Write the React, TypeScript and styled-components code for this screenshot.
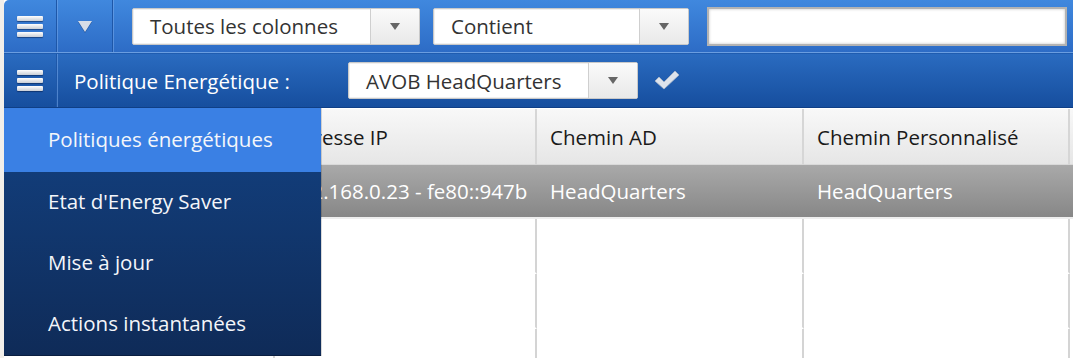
import React from 'react'
import styled, { createGlobalStyle } from 'styled-components'

const GlobalStyle = createGlobalStyle`
  html, body {
    margin: 0;
    padding: 0;
    background: #f2efea;
    font-family: "Open Sans", "Noto Sans", sans-serif;
  }
`

const menuItems = ['Politiques énergétiques', "Etat d'Energy Saver", 'Mise à jour', 'Actions instantanées']

const App = () => {
  return (
    <Frame>
      <GlobalStyle />
      <Shell>
        <TopBar>
          <IconCell>
            <Burger>
              <span />
              <span />
              <span />
            </Burger>
          </IconCell>
          <IconCell wide>
            <WhiteTriangle />
          </IconCell>
          <Filters>
            <Select width={288}>
              <span className="value">Toutes les colonnes</span>
              <span className="arrow">
                <SmallTriangle />
              </span>
            </Select>
            <Select width={256}>
              <span className="value">Contient</span>
              <span className="arrow">
                <SmallTriangle />
              </span>
            </Select>
            <SearchBox />
          </Filters>
        </TopBar>
        <SubBar>
          <IconCell>
            <Burger>
              <span />
              <span />
              <span />
            </Burger>
          </IconCell>
          <Label>Politique Energétique :</Label>
          <Select width={290}>
            <span className="value">AVOB HeadQuarters</span>
            <span className="arrow">
              <SmallTriangle />
            </span>
          </Select>
          <Check viewBox="0 0 28 22">
            <path
              d="M2 12 L6 8 L11 13 L22 2 L26 6 L11 20 Z"
              fill="#dde3ec"
              stroke="#aab6c8"
              strokeWidth="0.8"
              strokeLinejoin="round"
            />
          </Check>
        </SubBar>
        <Table>
          <HeadCell />
          <HeadCell>Adresse IP</HeadCell>
          <HeadCell>Chemin AD</HeadCell>
          <HeadCell>Chemin Personnalisé</HeadCell>
          <HeadCell />
          <RowCell selected />
          <RowCell selected>192.168.0.23 - fe80::947b</RowCell>
          <RowCell selected>HeadQuarters</RowCell>
          <RowCell selected>HeadQuarters</RowCell>
          <RowCell selected />
          {[0, 1, 2].map((r) =>
            [0, 1, 2, 3, 4].map((c) => <EmptyCell key={`${r}-${c}`} />)
          )}
        </Table>
        <Menu>
          {menuItems.map((item, i) => (
            <MenuItem key={item} active={i === 0} first={i === 0}>
              {item}
            </MenuItem>
          ))}
        </Menu>
      </Shell>
    </Frame>
  )
}

export default App

const Frame = styled.div`
  padding-left: 4px;
  height: 358px;
  overflow: hidden;
`

const Shell = styled.div`
  position: relative;
  background: #fff;
`

const TopBar = styled.div`
  display: flex;
  align-items: stretch;
  height: 52px;
  border-top-left-radius: 5px;
  background: linear-gradient(#4088de, #2d6cc6);
  border-bottom: 1px solid #6a9de0;
`

const SubBar = styled.div`
  display: flex;
  align-items: center;
  height: 53px;
  background: linear-gradient(#2a6bc0, #164e9e);
  border-bottom: 1px solid #0f3f86;
  border-top: 1px solid #1f5cb0;
`

const IconCell = styled.div<{ wide?: boolean }>`
  display: flex;
  align-items: center;
  justify-content: center;
  align-self: stretch;
  width: ${(p) => (p.wide ? 55 : 52)}px;
  border-right: 1px solid #1e57a8;
  box-shadow: 1px 0 0 rgba(120, 170, 235, 0.55);
`

const Burger = styled.div`
  display: flex;
  flex-direction: column;
  gap: 3px;
  width: 26px;

  span {
    display: block;
    height: 5px;
    border-radius: 1px;
    background: linear-gradient(#ffffff, #c9ced6);
    box-shadow: 0 1px 1px rgba(0, 20, 60, 0.5);
  }
`

const WhiteTriangle = styled.div`
  width: 0;
  height: 0;
  border-left: 7px solid transparent;
  border-right: 7px solid transparent;
  border-top: 11px solid #d6dde8;
  filter: drop-shadow(0 1px 0 rgba(0, 30, 80, 0.4));
`

const SmallTriangle = styled.div`
  width: 0;
  height: 0;
  border-left: 5px solid transparent;
  border-right: 5px solid transparent;
  border-top: 7px solid #666;
`

const Filters = styled.div`
  display: flex;
  align-items: center;
  gap: 13px;
  padding-left: 19px;
`

const Select = styled.div<{ width: number }>`
  display: flex;
  width: ${(p) => p.width}px;
  height: 37px;
  box-sizing: border-box;
  background: #fff;
  border: 1px solid #c9c9c9;
  border-radius: 2px;
  box-shadow: inset 0 0 0 1px #f0f0f0;
  font-size: 20.5px;
  color: #333;

  .value {
    flex: 1;
    display: flex;
    align-items: center;
    padding-left: 17px;
    white-space: nowrap;
  }

  .arrow {
    display: flex;
    align-items: center;
    justify-content: center;
    width: 48px;
    border-left: 1px solid #cfcfcf;
    background: linear-gradient(#fafafa, #e9e9e9);
  }
`

const SearchBox = styled.div`
  width: 360px;
  height: 39px;
  margin-left: 5px;
  box-sizing: border-box;
  background: #fff;
  border: 2px solid #b3b3b3;
  box-shadow: inset 0 0 3px rgba(0, 0, 0, 0.25);
`

const Label = styled.div`
  padding-left: 17px;
  width: 274px;
  font-size: 20.5px;
  color: #fff;
  white-space: nowrap;
`

const Check = styled.svg`
  width: 28px;
  height: 22px;
  margin-left: 15px;
  margin-top: -2px;
`

const Table = styled.div`
  display: grid;
  grid-template-columns: 271px 262px 267px 266px 1fr;
  grid-template-rows: 56px 54px repeat(3, 55px);
  margin-top: 1px;
  font-size: 20.5px;
`

const HeadCell = styled.div`
  display: flex;
  align-items: center;
  padding-left: 13px;
  white-space: nowrap;
  overflow: hidden;
  color: #1a1a1a;
  background: linear-gradient(#f8f8f8, #e6e6e6);
  border-right: 2px solid #d6d6d6;
  border-bottom: 1px solid #d9d9d9;
`

const RowCell = styled.div<{ selected?: boolean }>`
  display: flex;
  align-items: center;
  padding-left: 13px;
  white-space: nowrap;
  overflow: hidden;
  color: #fff;
  background: ${(p) => (p.selected ? 'linear-gradient(#a9a9a9, #878787)' : '#fff')};
  border-bottom: 2px solid #eeeeee;
`

const EmptyCell = styled.div`
  border-right: 2px solid #d4d4d4;
  border-bottom: 2px solid #fff;
`

const Menu = styled.div`
  position: absolute;
  top: 108px;
  left: 0;
  width: 317px;
  display: flex;
  flex-direction: column;
  background: linear-gradient(#134283, #0f2b58);
  border-bottom: 1px solid #0a1e40;
  box-shadow: 1px 0 0 rgba(0, 0, 0, 0.15);
`

const MenuItem = styled.div<{ active?: boolean; first?: boolean }>`
  display: flex;
  align-items: center;
  box-sizing: border-box;
  height: ${(p) => (p.first ? 64 : 61)}px;
  padding: 0 0 3px 44px;
  font-size: 20.5px;
  color: #f4f6fa;
  background: ${(p) => (p.active ? '#3a80e4' : 'transparent')};
`
